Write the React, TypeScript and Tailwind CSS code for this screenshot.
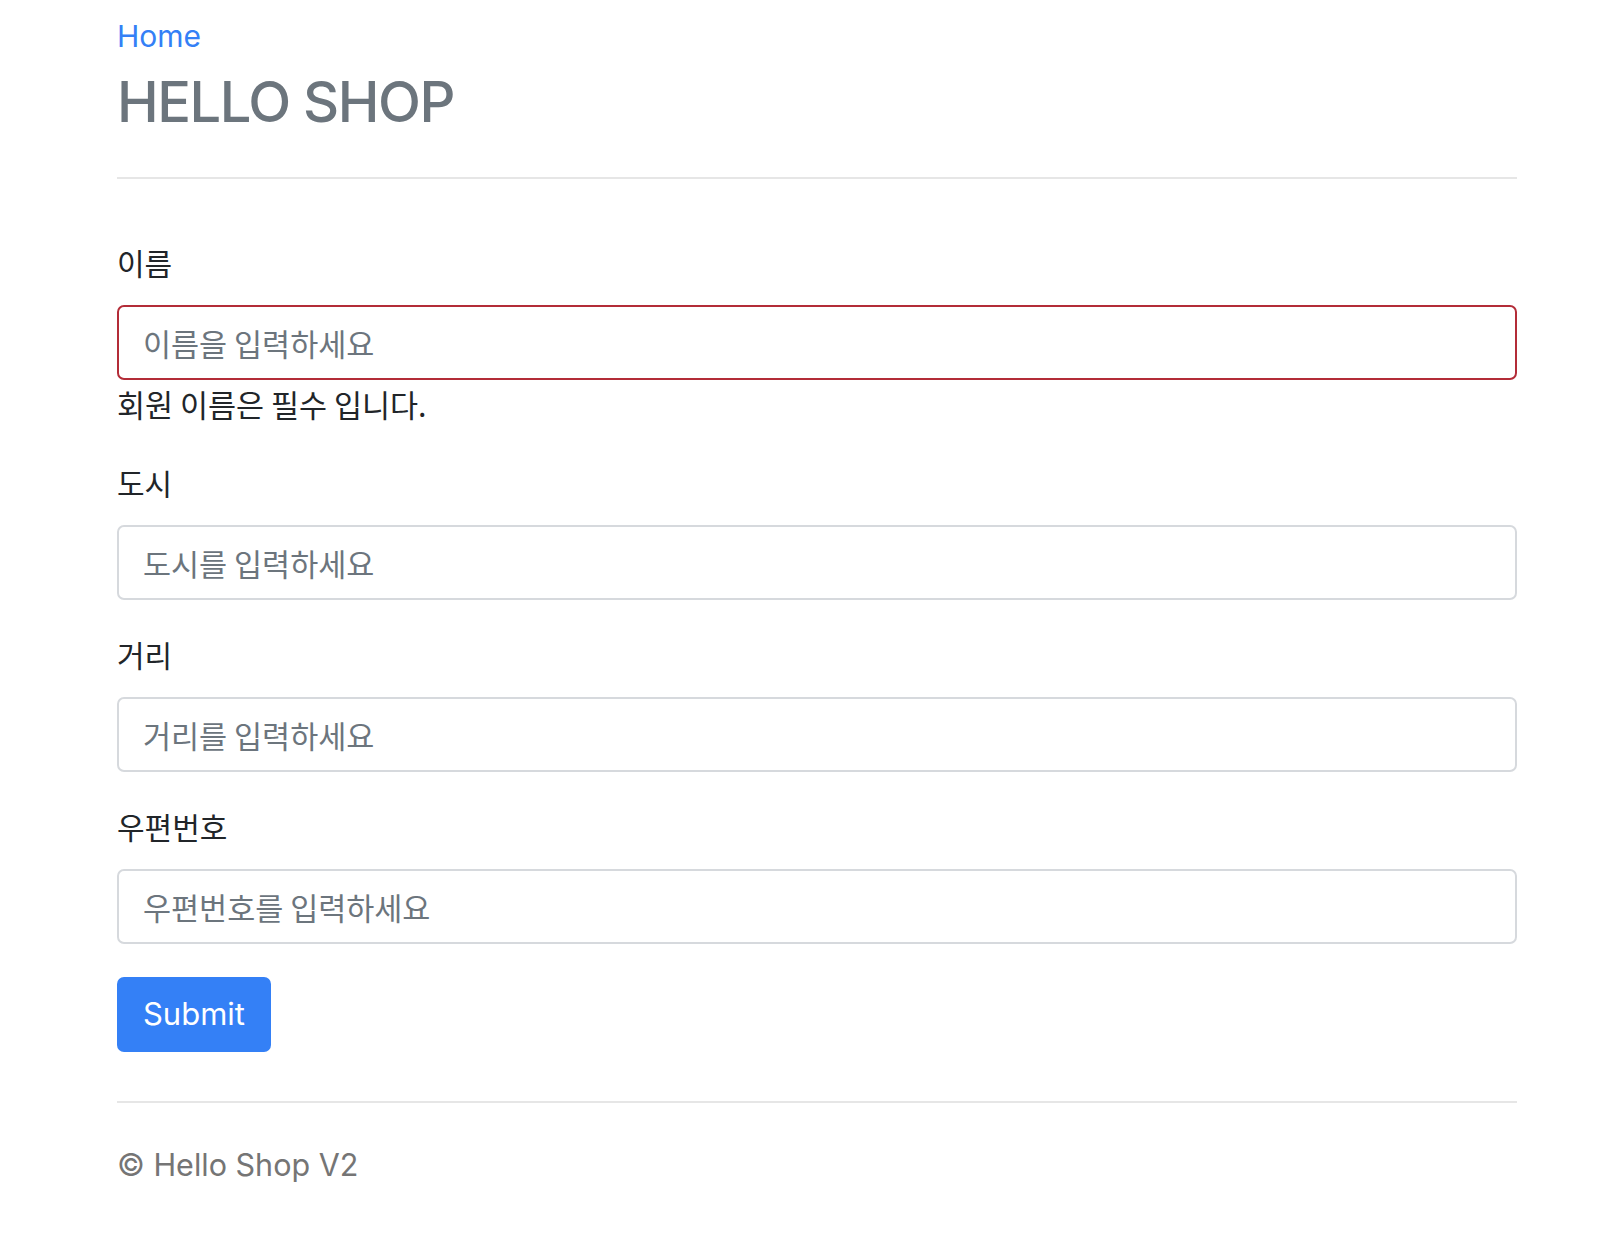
import React from "react";

const LATIN = "font-[family-name:Inter,'Noto_Sans_CJK_KR',sans-serif]";

function Field({ label, placeholder, invalid, mt }: { label: string; placeholder: string; invalid?: boolean; mt: string }) {
  return (
    <div className={`flex flex-col ${mt}`}>
      <label className="block text-[30px] leading-[32px] text-[#212529]">{label}</label>
      <input
        type="text"
        placeholder={placeholder}
        className={
          invalid
            ? "mt-[27px] block w-full h-[75px] rounded-[7px] border-2 border-[#b32c38] bg-white pl-[24px] text-[30.5px] text-[#212529] placeholder:text-[#6c757d] outline-none font-[family-name:'Noto_Sans_CJK_KR',Inter,sans-serif]"
            : "mt-[27px] block w-full h-[75px] rounded-[7px] border-2 border-[#d6d9dd] bg-white pl-[24px] text-[30.5px] text-[#212529] placeholder:text-[#6c757d] outline-none font-[family-name:'Noto_Sans_CJK_KR',Inter,sans-serif]"
        }
      />
    </div>
  );
}

export default function App() {
  return (
    <div className="min-h-[1246px] w-full bg-white font-[family-name:'Noto_Sans_CJK_KR',Inter,sans-serif]">
      <div className="ml-[117px] flex w-[1400px] flex-col pt-[18px]">
        <header className={`flex flex-col ${LATIN}`}>
          <a href="#" className="w-fit text-[30px] leading-[36px] text-[#3480f6]">
            Home
          </a>
          <h1 className="mt-[16px] text-[56px] leading-[64px] font-medium tracking-[-1.5px] text-[#6c757d]">
            HELLO SHOP
          </h1>
        </header>
        <div className="mt-[43px] h-[2px] bg-[#e6e6e6]" />

        <form className="mt-[67px] flex flex-col">
          <Field mt="mt-0" label="이름" placeholder="이름을 입력하세요" invalid />
          <p className="mt-[6px] text-[30.5px] leading-[36px] text-[#212529]">회원 이름은 필수 입니다.</p>
          <Field mt="mt-[44px]" label="도시" placeholder="도시를 입력하세요" />
          <Field mt="mt-[38px]" label="거리" placeholder="거리를 입력하세요" />
          <Field mt="mt-[38px]" label="우편번호" placeholder="우편번호를 입력하세요" />
          <button
            type="button"
            className={`mt-[33px] flex h-[75px] w-[154px] items-center justify-center rounded-[7px] bg-[#3480f6] text-[31px] text-white ${LATIN}`}
          >
            Submit
          </button>
        </form>

        <div className="mt-[49px] h-[2px] bg-[#e6e6e6]" />
        <footer className={`mt-[44px] text-[30.5px] leading-[36px] text-[#757575] ${LATIN}`}>© Hello Shop V2</footer>
      </div>
    </div>
  );
}
